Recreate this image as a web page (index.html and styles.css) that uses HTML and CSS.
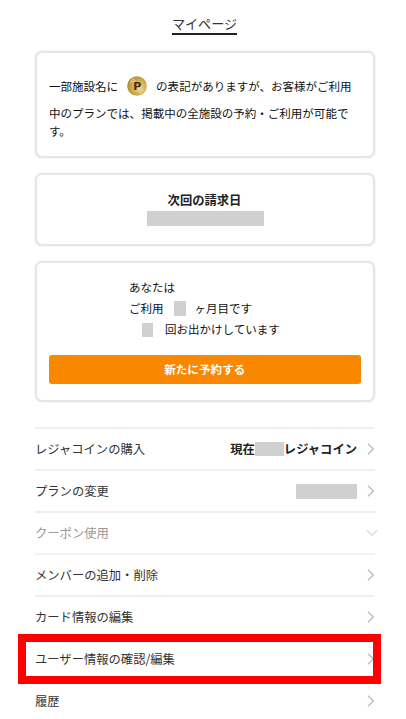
FILE: index.html
```html
<!DOCTYPE html>
<html lang="ja">
<head>
<meta charset="utf-8">
<title>マイページ</title>
<link rel="stylesheet" href="styles.css">
</head>
<body>
<svg class="defs" aria-hidden="true">
  <defs>
    <symbol id="chevron" viewBox="0 0 8 12"><path d="M1 .8 6.3 6 1 11.2" fill="none" stroke="currentColor" stroke-width="1.3"/></symbol>
    <radialGradient id="gold" cx="62%" cy="58%" r="65%">
      <stop offset="0" stop-color="#eee09a"/><stop offset=".5" stop-color="#d1b354"/><stop offset="1" stop-color="#ad8530"/>
    </radialGradient>
  </defs>
</svg>
<main class="page">
  <h1 class="title"><span>マイページ</span></h1>
  <section class="card notice">
    <p class="notice-first"><span>一部施設名に</span><svg class="coin" viewBox="0 0 20 20"><circle cx="10" cy="10" r="9.8" fill="url(#gold)"/><path d="M2 6 7 1l3 8zM18 14l-5 5-3-8z" fill="#f0dd91" opacity=".45"/><text x="10.3" y="13.8" text-anchor="middle">P</text></svg><span>の表記がありますが、お客様がご利用</span></p>
    <p class="notice-rest">中のプランでは、掲載中の全施設の予約・ご利用が可能です。</p>
  </section>
  <section class="card billing">
    <h2>次回の請求日</h2>
    <div class="mask mask-date"></div>
  </section>
  <section class="card usage">
    <div class="stats">
      <p>あなたは</p>
      <p>ご利用<i class="mask mask-month"></i>ヶ月目です</p>
      <p><i class="mask mask-count"></i>回お出かけしています</p>
    </div>
    <button class="reserve">新たに予約する</button>
  </section>
  <nav class="menu">
    <a class="row"><span>レジャコインの購入</span><b class="value">現在<i class="mask mask-coins"></i>レジャコイン</b><svg class="chevron"><use href="#chevron"/></svg></a>
    <a class="row"><span>プランの変更</span><b class="value"><i class="mask mask-plan"></i></b><svg class="chevron"><use href="#chevron"/></svg></a>
    <a class="row disabled"><span>クーポン使用</span><svg class="chevron down"><use href="#chevron"/></svg></a>
    <a class="row light"><span>メンバーの追加・削除</span><svg class="chevron"><use href="#chevron"/></svg></a>
    <a class="row"><span>カード情報の編集</span><svg class="chevron"><use href="#chevron"/></svg></a>
    <a class="row marked"><span>ユーザー情報の確認/編集</span><svg class="chevron"><use href="#chevron"/></svg></a>
    <a class="row"><span>履歴</span><svg class="chevron"><use href="#chevron"/></svg></a>
  </nav>
</main>
</body>
</html>
```

FILE: styles.css
```css
*, *::after { box-sizing: border-box; }
html { overflow: hidden; }
body {
  margin: 0;
  height: 719px;
  overflow: hidden;
  background: #fff;
  color: #111;
  font-family: "Noto Sans CJK JP", sans-serif;
}
h1, h2, p { margin: 0; }
.defs { position: absolute; width: 0; height: 0; }
.page { width: 340px; margin-left: 35px; padding-top: 14px; }
.title {
  height: 37px;
  padding-right: 1px;
  font-size: 13.1px;
  font-weight: 400;
  line-height: 20px;
  text-align: center;
  color: #333;
}
.title span { display: inline-block; height: 21px; border-bottom: 2px solid #222; }
.card {
  border: 2px solid #e5e5e5;
  border-radius: 7px;
  box-shadow: 0 0 2px rgba(0, 0, 0, .12);
  font-size: 11.53px;
}
.notice { height: 107px; padding: 22px 0 0 12px; white-space: nowrap; }
.notice-first { display: flex; align-items: center; height: 22px; }
.coin { width: 20px; height: 20px; margin: 0 9px; }
.coin text { font: 700 11px "DejaVu Sans", sans-serif; fill: #4b2710; }
.notice-rest { width: 304px; margin-top: 8px; line-height: 17.5px; white-space: normal; }
.billing { height: 73px; margin-top: 15px; padding: 15px 1px 0 0; text-align: center; }
.billing h2 { font-size: 12.3px; line-height: 20px; height: 21px; color: #222; }
.mask { display: block; flex: none; background: #d0d0d0; }
.mask-date { width: 117px; height: 15px; margin-left: 110px; }
.usage { height: 141px; margin-top: 15px; padding: 14px 12px 0; }
.stats { margin-left: 80px; line-height: 21px; }
.stats p { display: flex; align-items: center; height: 21px; white-space: nowrap; }
.mask-month { width: 12px; height: 15px; margin: 0 9px 0 10px; }
.mask-count { width: 11px; height: 14px; margin: 0 12px 0 13px; }
.reserve {
  display: block;
  width: 311.5px;
  height: 29px;
  margin-top: 15px;
  padding: 0;
  border: 0;
  border-radius: 3px;
  background: #f98700;
  color: #fff;
  font: 700 11.6px/29px "Noto Sans CJK JP", sans-serif;
}
.menu { margin-top: 25px; }
.row {
  position: relative;
  display: flex;
  align-items: center;
  height: 42px;
  border-top: 2px solid #efefef;
  font-size: 12.3px;
  color: #333;
  white-space: nowrap;
}
.row span { flex: 1; }
.value { display: flex; align-items: center; margin-right: 10px; color: #222; }
.mask-coins { width: 29px; height: 14px; }
.mask-plan { width: 61px; height: 15px; }
.chevron { width: 8px; height: 12px; color: #bbb; }
.disabled { color: #999; }
.disabled .chevron { color: #ddd; }
.down { transform: translateX(1px) rotate(90deg); }
.light { border-top-color: #f3f3f3; }
.marked::after {
  content: "";
  position: absolute;
  z-index: 1;
  top: -5px;
  left: -17px;
  width: 363px;
  height: 50px;
  border: 8px solid #f00;
}
```
